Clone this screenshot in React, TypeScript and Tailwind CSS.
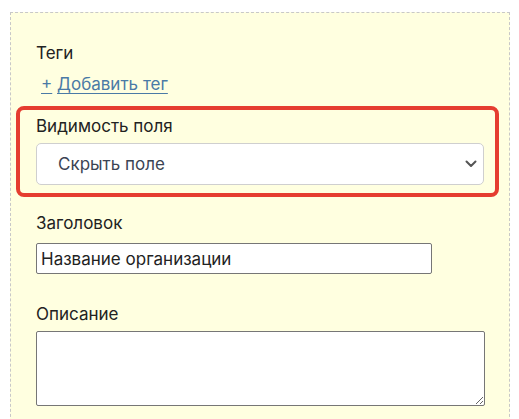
import React from "react";

export default function App() {
  return (
    <div className="w-[519px] h-[419px] overflow-hidden bg-white" style={{ fontFamily: "Inter, 'Noto Sans', sans-serif" }}>
      <div className="ml-[10px] mt-[12px] w-[500px] h-[420px] border border-dashed border-[#c8c8c8] bg-[#ffffe0] pl-[25px] pt-[28px] text-[17px] leading-[24px] text-[#222]">
        <div>Теги</div>
        <div className="mt-[7px] pl-[5px] text-[#4a7aa6]">
          <span className="underline underline-offset-[3px]">+</span>{" "}
          <span className="underline underline-offset-[3px]">Добавить тег</span>
        </div>
        <div className="mt-[10px] -ml-[20px] w-[483px] rounded-[8px] border-[4px] border-[#e53d30] px-[16px] pt-[4px] pb-[8px]">
          <div>Видимость поля</div>
          <div className="relative mt-[5px] h-[42px] w-[448px] rounded-[5px] border border-[#cfcfcf] bg-white">
            <div className="pl-[21px] pt-[8px] text-[#3b4454]">Скрыть поле</div>
            <svg className="absolute right-[6px] top-[16px]" width="12" height="8" viewBox="0 0 12 8">
              <path d="M1.5 1.5 L6 6 L10.5 1.5" fill="none" stroke="#555" strokeWidth="2" strokeLinecap="round" strokeLinejoin="round" />
            </svg>
          </div>
        </div>
        <div className="mt-[14px]">Заголовок</div>
        <input
          readOnly
          value="Название организации"
          className="mt-[8px] block h-[31px] w-[396px] rounded-[2px] border border-[#767676] bg-white px-[4px] text-[17px] text-[#222] outline-none"
          style={{ fontFamily: "Inter, 'Noto Sans', sans-serif" }}
        />
        <div className="mt-[28px]">Описание</div>
        <textarea
          readOnly
          className="mt-[5px] block h-[75px] w-[449px] rounded-[2px] border border-[#767676] bg-white outline-none"
        />
      </div>
    </div>
  );
}
